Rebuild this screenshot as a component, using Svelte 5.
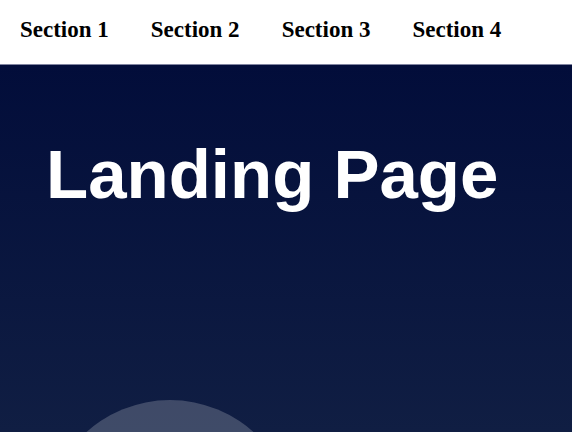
<script>
  const sections = [1, 2, 3, 4];
</script>

<header>
  <nav aria-label="Sections">
    <ul>
      {#each sections as n}
        <li><a href={`#section${n}`}>Section {n}</a></li>
      {/each}
    </ul>
  </nav>
</header>
<main id="section1">
  <h1>Landing Page</h1>
  <div class="circle"></div>
</main>

<style>
  :global(body) {
    margin: 0;
    background: #fff;
  }
  header {
    padding: 16px 20px 20px;
    border-bottom: 1px solid #8084a0;
  }
  ul {
    display: flex;
    gap: 42px;
    margin: 0;
    padding: 0;
    list-style: none;
  }
  a {
    display: block;
    color: #000;
    font: bold 23px/28px "Liberation Serif", "Times New Roman", serif;
    text-decoration: none;
    white-space: nowrap;
  }
  main {
    position: relative;
    box-sizing: border-box;
    min-height: calc(100vh - 65px);
    padding: 64px 46px;
    overflow: hidden;
    background: linear-gradient(#020d3a, #101e43);
  }
  h1 {
    margin: 0;
    color: #fff;
    font: bold 69px/92px "Liberation Sans", Helvetica, Arial, sans-serif;
  }
  .circle {
    position: absolute;
    top: 335px;
    left: 45px;
    width: 250px;
    height: 250px;
    border-radius: 50%;
    background: rgba(255, 255, 255, 0.2);
  }
</style>
